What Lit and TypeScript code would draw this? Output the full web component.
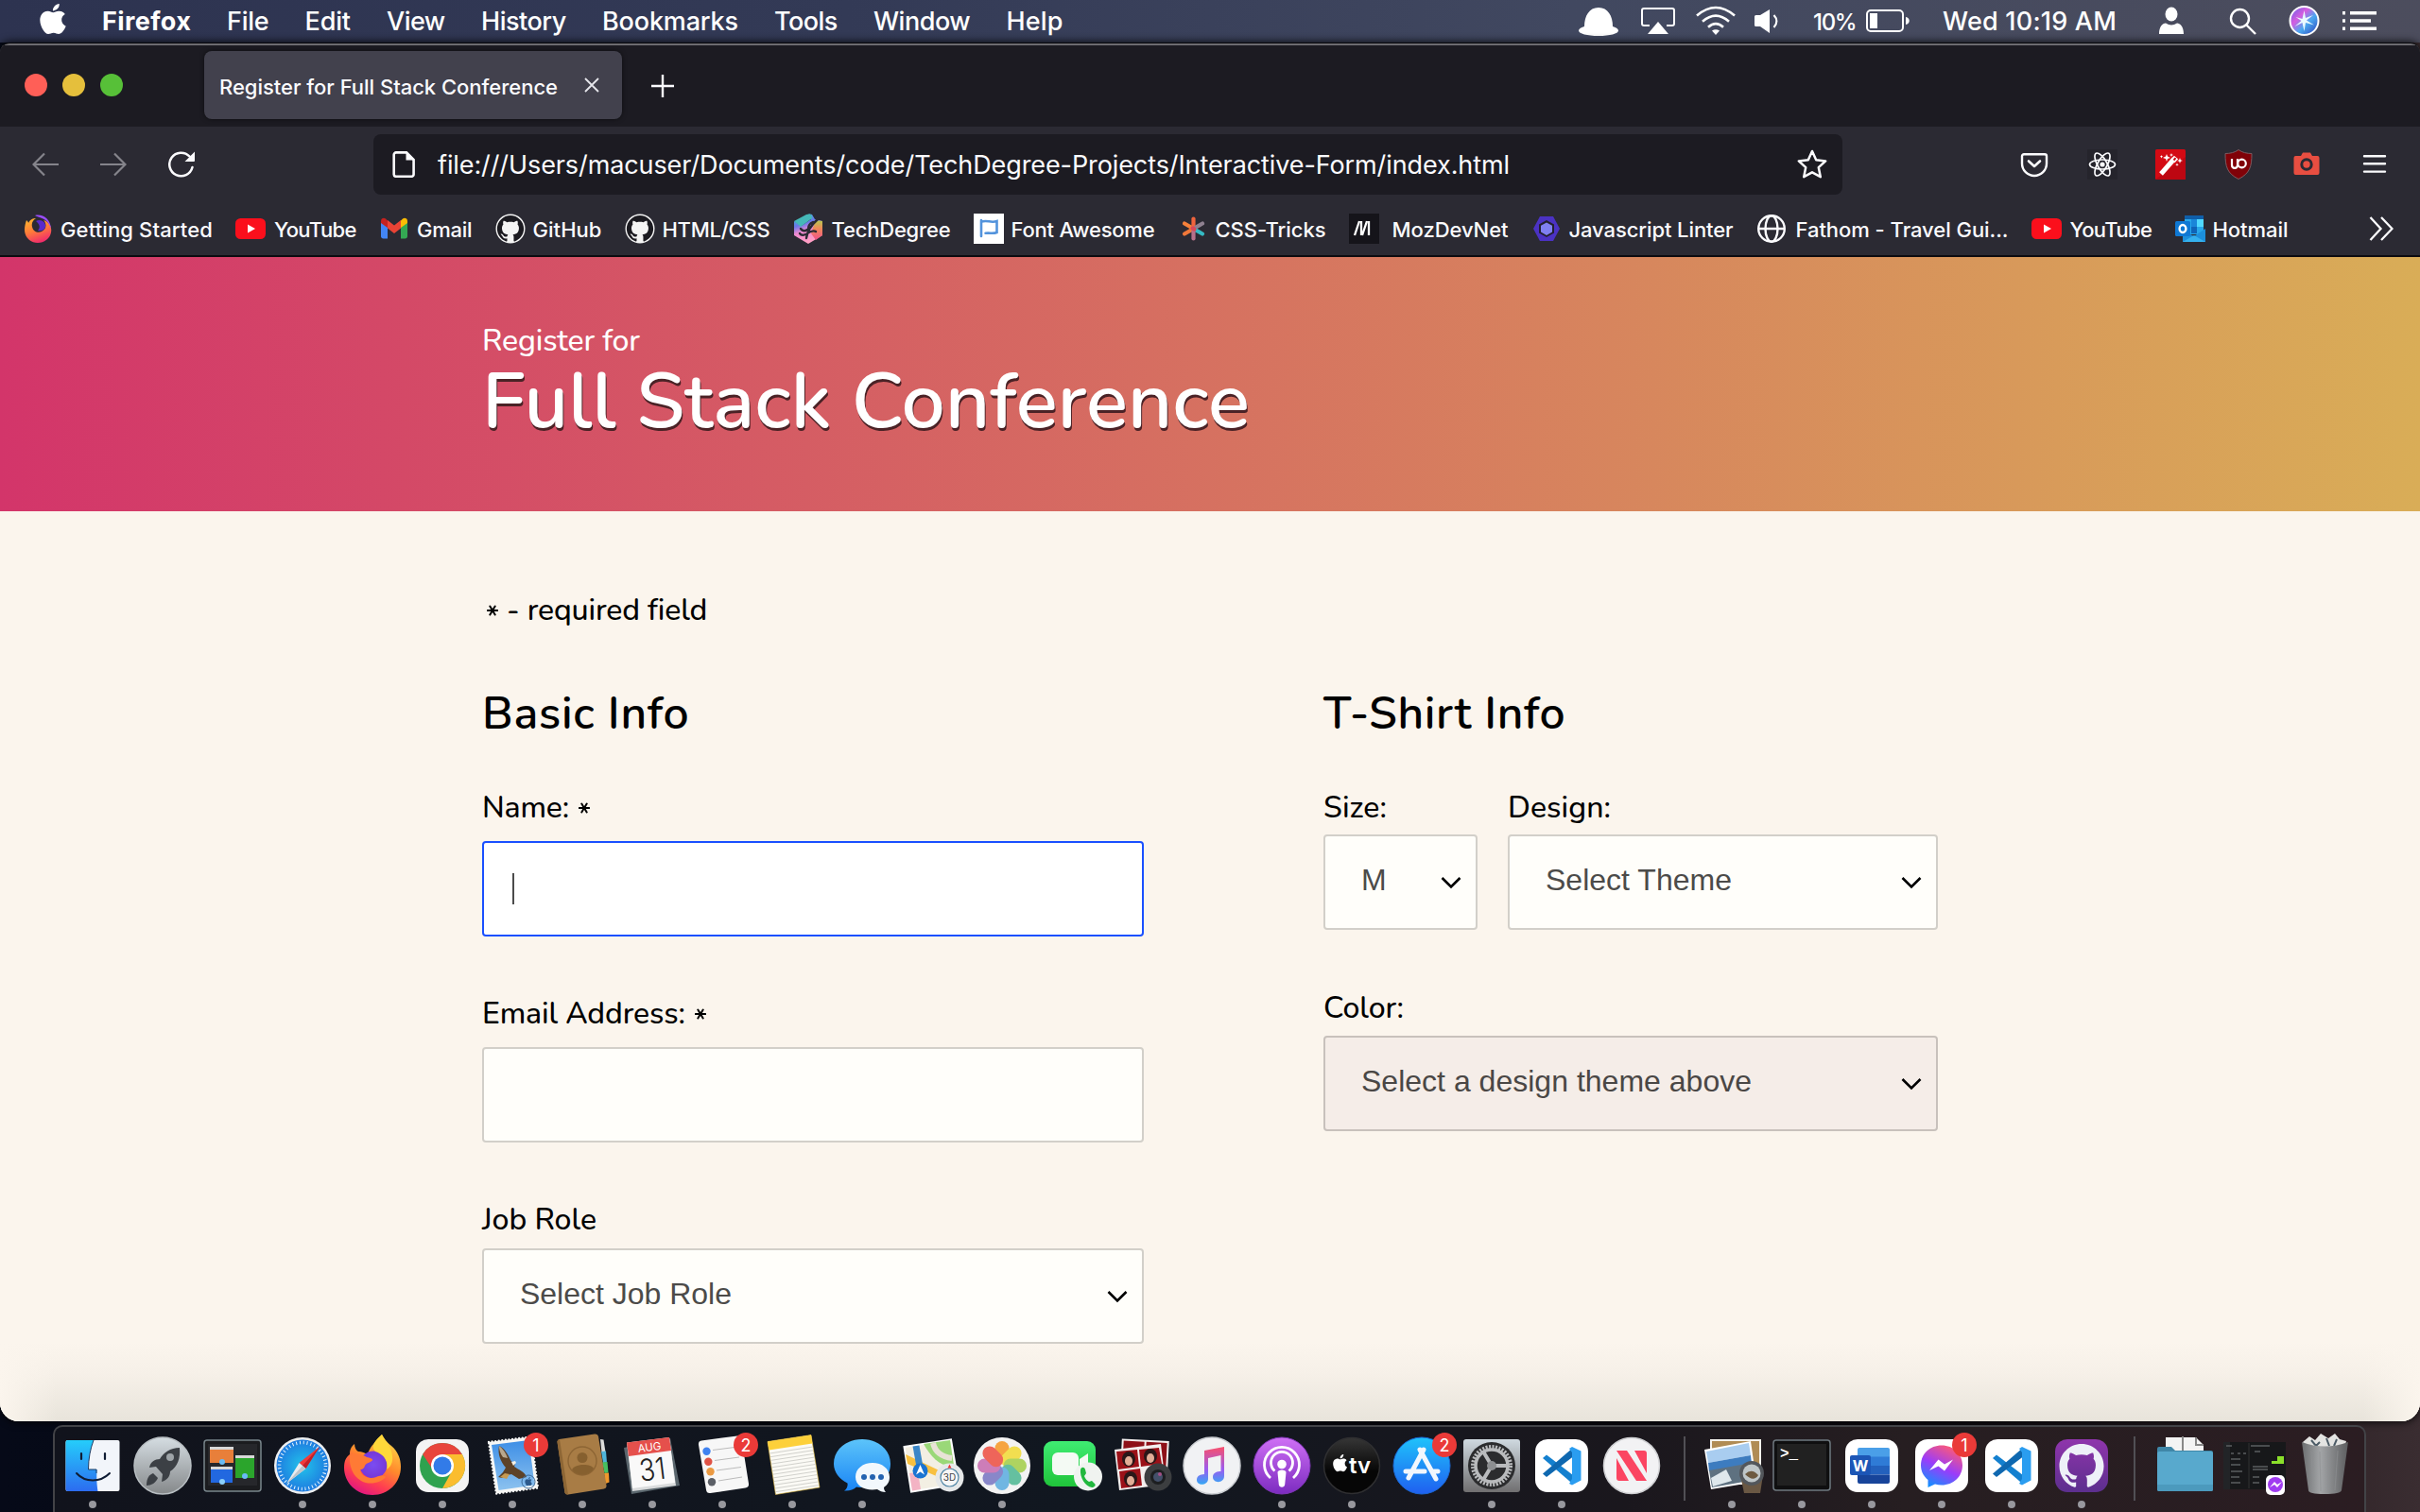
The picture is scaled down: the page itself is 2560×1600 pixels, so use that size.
import { LitElement, html, svg, css, nothing } from "lit";
import { customElement, property } from "lit/decorators.js";

const GITHUB =
  "M12 .297c-6.63 0-12 5.373-12 12 0 5.303 3.438 9.8 8.205 11.385.6.113.82-.258.82-.577 0-.285-.01-1.04-.015-2.04-3.338.724-4.042-1.61-4.042-1.61C4.422 18.07 3.633 17.7 3.633 17.7c-1.087-.744.084-.729.084-.729 1.205.084 1.838 1.236 1.838 1.236 1.07 1.835 2.809 1.305 3.495.998.108-.776.417-1.305.76-1.605-2.665-.3-5.466-1.332-5.466-5.93 0-1.31.465-2.38 1.235-3.22-.135-.303-.54-1.523.105-3.176 0 0 1.005-.322 3.3 1.23.96-.267 1.98-.399 3-.405 1.02.006 2.04.138 3 .405 2.28-1.552 3.285-1.23 3.285-1.23.645 1.653.24 2.873.12 3.176.765.84 1.23 1.91 1.23 3.22 0 4.61-2.805 5.625-5.475 5.92.42.36.81 1.096.81 2.22 0 1.606-.015 2.896-.015 3.286 0 .315.21.69.825.57C20.565 22.092 24 17.592 24 12.297c0-6.627-5.373-12-12-12";
const APPLE =
  "M12.152 6.896c-.948 0-2.415-1.078-3.96-1.04-2.04.027-3.91 1.183-4.961 3.014-2.117 3.675-.546 9.103 1.519 12.09 1.013 1.454 2.208 3.09 3.792 3.039 1.52-.065 2.09-.987 3.935-.987 1.831 0 2.35.987 3.96.948 1.637-.026 2.676-1.48 3.676-2.948 1.156-1.688 1.636-3.325 1.662-3.415-.039-.013-3.182-1.221-3.22-4.857-.026-3.04 2.48-4.494 2.597-4.559-1.429-2.09-3.623-2.324-4.39-2.376-2-.156-3.675 1.09-4.61 1.09zM15.53 3.83c.843-1.012 1.4-2.427 1.245-3.83-1.207.052-2.662.805-3.532 1.818-.78.896-1.454 2.338-1.273 3.714 1.338.104 2.715-.688 3.559-1.701";

/** A single line of text tracked so that it fills a given width. */
@customElement("fit-text")
class FitText extends LitElement {
  @property({ type: Number }) w = 0;
  @property() text = "";
  static styles = css`
    :host { display: inline-block; white-space: pre; flex: none; }
    .run { display: inline-block; }
  `;
  render() {
    return html`<span class="run">${this.text}</span>`;
  }
  updated() {
    const run = this.renderRoot.querySelector(".run") as HTMLElement;
    run.style.letterSpacing = "0px";
    const natural = run.getBoundingClientRect().width;
    const n = this.text.length;
    if (this.w && n > 1) {
      run.style.letterSpacing = `${((this.w - natural) / (n - 0.5)).toFixed(3)}px`;
      this.style.width = `${this.w}px`;
    }
  }
}

/* ---------- menu bar ---------- */

const MENUS: [string, number][] = [
  ["File", 44.5], ["Edit", 48.5], ["View", 62], ["History", 90], ["Bookmarks", 144],
  ["Tools", 67], ["Window", 102.5], ["Help", 60],
];

const STATUS: { gap: number; w: number; art?: unknown; text?: string; small?: boolean }[] = [
  { gap: 0, w: 42, art: svg`<path d="M6 20C6 9 11 0 21 0s15 9 15 20c4 1 6 3 6 4.500 0 3-9 5.500-21 5.500S0 27.500 0 24.500C0 23 2 21 6 20z" fill="#fff"/>` },
  { gap: 24, w: 36, art: svg`<path d="M9 19H3a2 2 0 0 1-2-2V3a2 2 0 0 1 2-2h30a2 2 0 0 1 2 2v14a2 2 0 0 1-2 2h-6" fill="none" stroke="#fff" stroke-width="2"/><path d="M18 15l11 13H7z" fill="#fff"/>` },
  { gap: 22, w: 42, art: svg`<g fill="none" stroke="#fff" stroke-width="2.6"><path d="M1 8.500Q21-8.500 41 8.500"/><path d="M7 14.800Q21 2.500 35 14.800"/><path d="M13 20.800Q21 13.500 29 20.800"/></g><path d="M17 24.500q4-2.500 8 0l-4 4.500z" fill="#fff"/>` },
  { gap: 20, w: 26, art: svg`<path d="M0 9.500q0-1.500 1.500-1.500H6L16 2v25l-10-7H1.500Q0 20 0 18.500z" fill="#fff"/><path d="M20.500 8c3.800 4 3.800 9 0 13" fill="none" stroke="#fff" stroke-width="2.200"/>` },
  { gap: 36, w: 46, text: "10%", small: true },
  { gap: 10, w: 46, art: svg`<rect x="1" y="3" width="38" height="22" rx="4" fill="none" stroke="#fff" stroke-width="2"/><rect x="4" y="6" width="8" height="16" fill="#fff"/><path d="M42 10c5 1 5 7 0 8z" fill="#fff"/>` },
  { gap: 35, w: 184, text: "Wed 10:19 AM" },
  { gap: 45, w: 26, art: svg`<ellipse cx="13" cy="7" rx="6.500" ry="7.500" fill="#fff"/><path d="M0 28c0-8 4-11.500 7-11.500 4 2.500 8 2.500 12 0 3 0 7 3.500 7 11.500z" fill="#fff"/>` },
  { gap: 48, w: 29, art: svg`<g fill="none" stroke="#fff" stroke-width="2.400"><circle cx="11.500" cy="11.500" r="9.500"/><path d="M18.500 18.500L28 28"/></g>` },
  { gap: 34, w: 33, art: svg`<defs><linearGradient id="siri" x1="0" y1="0" x2="1" y2="1"><stop offset="0" stop-color="#5a62e8"/><stop offset=".35" stop-color="#d65ce0"/><stop offset=".6" stop-color="#4aa8f0"/><stop offset="1" stop-color="#2b3cb8"/></linearGradient></defs><circle cx="16.500" cy="14" r="15" fill="url(#siri)" stroke="#fff" stroke-width="2"/><path d="M16.500 3l1.500 8 8-3-7 5.500 8 5-9-2.500-1.500 9-2-9-8 4 7-6-6-4 7 2z" fill="#e9fbff"/>` },
  { gap: 24, w: 36, art: svg`<g fill="#fff"><path d="M0 4h3v3.500H0zM0 12.200h3v3.500H0zM0 20.500h3V24H0zM8 4h28v3.500H8zM8 12.200h22v3.500H8zM8 20.500h28V24H8z"/></g>` },
];

@customElement("menu-bar")
class MenuBar extends LitElement {
  static styles = css`
    :host { display: flex; flex: none; height: 45px; box-sizing: border-box; align-items: flex-start;
      font: 500 27px/45px Inter, "Liberation Sans", sans-serif; color: #fff;
      padding: 0 46px 0 42px;
      background: linear-gradient(90deg, #2d3350 0%, #333a56 35%, #414860 65%, #4c4d5d 100%); }
    .apple { width: 28px; height: 32px; margin: 4px 38px 0 0; flex: none; }
    .menus { display: flex; gap: 38px; }
    .bold { font-weight: 700; }
    .status { display: flex; margin-left: auto; }
    .status svg { display: block; height: 28px; margin-top: 8px; overflow: visible; }
    .small { font-size: 24px; line-height: 43px; }
  `;
  render() {
    return html`
      <svg class="apple" viewBox="2 0 20 24" preserveAspectRatio="none"><path d=${APPLE} fill="#fff" /></svg>
      <div class="menus">
        <fit-text class="bold" .w=${94} .text=${"Firefox"}></fit-text>
        ${MENUS.map(([t, w]) => html`<fit-text .w=${w} .text=${t}></fit-text>`)}
      </div>
      <div class="status">
        ${STATUS.map((s) => html`<div style="margin-left:${s.gap}px;width:${s.w}px">
          ${s.text
            ? html`<fit-text class=${s.small ? "small" : ""} .w=${s.w} .text=${s.text}></fit-text>`
            : html`<svg width=${s.w} height="28" viewBox="0 0 ${s.w} 28">${s.art}</svg>`}
        </div>`)}
      </div>`;
  }
}

/* ---------- browser chrome ---------- */

const YT = svg`<rect x="0" y="5" width="32" height="22" rx="5.500" fill="#fb0f1c"/><path d="M13 11.500l8 4.500-8 4.500z" fill="#fff"/>`;
const GH = svg`<circle cx="16" cy="16" r="15.500" fill="#f4f4f4"/><path transform="translate(1.900 1.600) scale(1.175)" d=${GITHUB} fill="#1b1a20"/>`;

const BOOKMARKS: { art: unknown; t: string; w: number; lead?: number }[] = [
  { t: "Getting Started", w: 161, art: svg`<defs><linearGradient id="ffb" x1=".2" y1="0" x2=".6" y2="1"><stop offset="0" stop-color="#ffb52e"/><stop offset=".5" stop-color="#ff7a3a"/><stop offset="1" stop-color="#f0286e"/></linearGradient></defs><path d="M4 7c1 1 2 2 2 3 2-4 5-5 8-5-3 2-5 5-4 9 1 5 6 7 10 5 5-2 6-8 2-12 7 2 9 8 8 13-1 6-7 11-14 11C8 31 2 25 2 17c0-4 1-7 2-10z" fill="url(#ffb)"/><path d="M13 2c8-2 17 4 17 15-1-6-5-11-12-13-2-1-4-1-5-2z" fill="#9b4dff"/><path d="M14 8c5-3 11 1 10 6-1 4-5 5-8 4 3-3 2-7-2-10z" fill="#592acb"/>` },
  { t: "YouTube", w: 87, lead: 1, art: YT },
  { t: "Gmail", w: 58.5, art: svg`<path d="M2 9v15c0 1.500 1 2.500 2.500 2.500H9V13z" fill="#4285f4"/><path d="M30 9v15c0 1.500-1 2.500-2.500 2.500H23V13z" fill="#34a853"/><path d="M23 7.500V15l7-5V8c0-3-3-4-5-2.500z" fill="#fbbc04"/><path d="M9 7.500V15l-7-5V8c0-3 3-4 5-2.500z" fill="#c5221f"/><path d="M9 7l7 5.500L23 7v8.500l-7 5.500-7-5.500z" fill="#ea4335"/>` },
  { t: "GitHub", w: 73, art: GH },
  { t: "HTML/CSS", w: 114, art: GH },
  { t: "TechDegree", w: 126, lead: 1, art: svg`<defs><linearGradient id="td" x1="0" y1=".1" x2=".3" y2="1"><stop offset="0" stop-color="#3fb0d8"/><stop offset=".35" stop-color="#6a78e8"/><stop offset=".6" stop-color="#f08ad0"/><stop offset="1" stop-color="#ff9ec4"/></linearGradient><linearGradient id="tdr" x1="0" y1="0" x2="0" y2="1"><stop offset="0" stop-color="#b8c850"/><stop offset=".4" stop-color="#f08a58"/><stop offset="1" stop-color="#f0508a"/></linearGradient></defs><path d="M16 0l3 2v4L9 13 1 8v15l15 9 15-9V8l-8-2-3-5z" fill="url(#td)"/><path d="M1 8L14 1q6-2 6 4L8 14z" fill="#45b8b8"/><path d="M31 8q-8-2-9 4l-3 9 5 7 7-5z" fill="url(#tdr)"/><path d="M14 26q1-10 12-20M15 17q-4 3-7-1M16 16q0-5 5-7M15 21q6-4 9-2M13 22q-4 2-6-1" fill="none" stroke="#2b2a33" stroke-width="2.400" stroke-linecap="round"/>` },
  { t: "Font Awesome", w: 152, art: svg`<rect width="32" height="32" fill="#fff"/><path d="M8 7v17M8 8.800c6-2.600 10 1.600 16.500-.8v12c-4 1.600-7 .2-12 .8" fill="none" stroke="#5293dc" stroke-width="2.600" stroke-linecap="round"/>` },
  { t: "CSS-Tricks", w: 117, art: svg`<g stroke-width="4.200" stroke-linecap="round"><path d="M16.500 5.500v8" stroke="#f0643d"/><path d="M7 10.500l7 4" stroke="#f5803a"/><path d="M26 10.500l-7 4" stroke="#8e8090"/><path d="M7 21.500l7-4" stroke="#f0783a"/><path d="M26 21.500l-7-4" stroke="#35b9c4"/><path d="M16.500 26.500v-8" stroke="#b8708a"/><path d="M15.500 15.500l2 1" stroke="#d8485a"/></g>` },
  { t: "MozDevNet", w: 123, lead: 6, art: svg`<rect width="32" height="32" fill="#15141a"/><path d="M6 23l5-15M13 8v15M14 23l5-15M21 8v15" fill="none" stroke="#fff" stroke-width="2.300"/>` },
  { t: "Javascript Linter", w: 174, art: svg`<path d="M9 3h14l7 13-7 13H9L2 16z" fill="#4b32c3"/><path d="M16 7l8 4.500v9L16 25l-8-4.500v-9z" fill="#23212e"/><path d="M16 9.500l6 3.300v6.600L16 23l-6-3.600v-6.600z" fill="#8080f2"/>` },
  { t: "Fathom - Travel Gui...", w: 225, lead: 2, art: svg`<g fill="none" stroke="#fbfbfe" stroke-width="2.400"><circle cx="16" cy="16" r="13.800"/><ellipse cx="16" cy="16" rx="6.500" ry="13.800"/><path d="M2 16h28"/></g>` },
  { t: "YouTube", w: 87, lead: 1, art: YT },
  { t: "Hotmail", w: 80, art: svg`<path d="M10 2h20v20H10z" fill="#28a8ea"/><path d="M10 2h20v4H10z" fill="#0f5ea8"/><path d="M17 6h6v8h-6z" fill="#1a86d8"/><path d="M23 6h7v8h-7z" fill="#50d9ff"/><path d="M17 14h6v7h-6z" fill="#0f64b8"/><path d="M8 18l12 6 12-8v14H8z" fill="#1c8fdc"/><path d="M8 30l12-7 12 7z" fill="#35b1ee"/><rect y="8" width="16" height="16" rx="1.500" fill="#0f78d4"/><ellipse cx="8" cy="16" rx="3.400" ry="4" fill="none" stroke="#fff" stroke-width="2.400"/>` },
];

const TOOLS: unknown[] = [
  svg`<path d="M5 5.200h22a2 2 0 0 1 2 2V15a13 13 0 0 1-26 0V7.200a2 2 0 0 1 2-2z" fill="none" stroke="#fbfbfe" stroke-width="2.400"/><path d="M10 12.500l6 5.500 6-5.500" fill="none" stroke="#fbfbfe" stroke-width="2.600" stroke-linecap="round" stroke-linejoin="round"/>`,
  svg`<rect width="32" height="32" fill="#25242c"/><g fill="none" stroke="#fbfbfe" stroke-width="1.700"><ellipse cx="16" cy="16" rx="13.500" ry="5"/><ellipse cx="16" cy="16" rx="13.500" ry="5" transform="rotate(60 16 16)"/><ellipse cx="16" cy="16" rx="13.500" ry="5" transform="rotate(120 16 16)"/></g><circle cx="16" cy="16" r="2.600" fill="#fbfbfe"/>`,
  svg`<rect width="32" height="32" rx="1.500" fill="#d40a14"/><path d="M0 32L32 8v24z" fill="#bd0712"/><path d="M6 26L20 10" stroke="#fff" stroke-width="5"/><path d="M18.500 12.500L22 8.500" stroke="#fff" stroke-width="5.600"/><path d="M19.500 11.500l2-2.300" stroke="#c40812" stroke-width="2"/><g fill="#fff"><path d="M12 5l1 2.600L16 9l-3 1-1 3-1-3-3-1 3-1.400zM17 4l.6 1.400L19 6l-1.400.6L17 8l-.6-1.400L15 6l1.400-.6zM26 9l.8 2.200L29 12l-2.200.8L26 15l-.8-2.200L23 12l2.200-.8zM23 14.500l.5 1.300 1.300.5-1.300.5-.5 1.300-.5-1.300-1.300-.5 1.300-.5zM6.500 6l.5 1.300 1.300.5-1.300.5-.5 1.300-.5-1.300-1.300-.5 1.300-.5z"/></g>`,
  svg`<path d="M16 .5c4 3 9 4 14 4 0 14-2 21-14 27C4 25.500 2 18.500 2 4.500c5 0 10-1 14-4z" fill="#800208" stroke="#7d5a60" stroke-width="1"/><g fill="none" stroke="#fff" stroke-width="2.200"><path d="M9 10v6.500c0 4.500 6 4.500 6 0V10"/><circle cx="19.500" cy="15" r="4.300"/></g>`,
  svg`<path d="M4.500 7H10l2-3.500h8L22 7h5.500A2 2 0 0 1 29.500 9v16a2 2 0 0 1-2 2h-23a2 2 0 0 1-2-2V9a2 2 0 0 1 2-2z" fill="#e84e41"/><circle cx="16" cy="16" r="5.200" fill="none" stroke="#2b2a33" stroke-width="3"/>`,
  svg`<g stroke="#fbfbfe" stroke-width="2.400" stroke-linecap="round"><path d="M5 7.200h22M5 15.200h22M5 23.600h22"/></g>`,
];

@customElement("browser-chrome")
class BrowserChrome extends LitElement {
  static styles = css`
    :host { display: block; flex: none; color: #fbfbfe; font-family: Inter, "Liberation Sans", sans-serif; }
    svg { display: block; flex: none; }
    .tabs { height: 86px; background: #1c1b22; display: flex; align-items: flex-start; box-sizing: border-box; padding: 6px 0 0 26px; }
    .lights { display: flex; gap: 16px; margin-top: 24px; }
    .light { width: 24px; height: 24px; border-radius: 50%; }
    .close { background: #ff5f57; } .min { background: #e5bf3c; } .max { background: #57c038; }
    .tab { margin-left: 86px; width: 442px; height: 72px; box-sizing: border-box; padding: 0 24px 0 16px; border-radius: 8px;
      background: #42414d; box-shadow: 0 0 5px rgba(0,0,0,.55); display: flex; align-items: center; justify-content: space-between;
      font-size: 22px; font-weight: 500; line-height: 30px; }
    .label { padding-top: 3px; }
    .plus { margin: 25px 0 0 31px; }
    .bar { height: 80px; background: #2b2a33; display: flex; align-items: center; box-sizing: border-box; padding: 0 32px 0 34px; }
    .nav { display: flex; gap: 44px; width: 361px; }
    .url { width: 1554px; height: 64px; box-sizing: border-box; border-radius: 8px; background: #1c1b22; display: flex; align-items: center;
      padding: 0 16px 0 20px; font-size: 27px; line-height: 40px; }
    .address { padding-top: 2px; }
    .doc { margin-right: 24px; }
    .star { margin-left: auto; }
    .tools { margin-left: auto; display: flex; gap: 40px; }
    .marks { height: 56px; background: #2b2a33; display: flex; align-items: flex-start; box-sizing: border-box; padding: 12px 28px 0 24px;
      font-size: 22px; font-weight: 500; line-height: 34px; }
    .list { display: flex; gap: 24px; }
    .mark { display: flex; gap: 8px; }
    .more { margin: 3px 0 0 auto; }
    .edge { height: 2px; background: #0c0b10; }
  `;
  render() {
    return html`
      <div class="tabs">
        <div class="lights"><div class="light close"></div><div class="light min"></div><div class="light max"></div></div>
        <div class="tab">
          <fit-text class="label" .w=${358} .text=${"Register for Full Stack Conference"}></fit-text>
          <svg width="16" height="16" viewBox="0 0 16 16"><path d="M1 1l14 14M15 1L1 15" stroke="#e6e6ec" stroke-width="1.800" /></svg>
        </div>
        <svg class="plus" width="24" height="24" viewBox="0 0 24 24"><path d="M12 0v24M0 12h24" stroke="#fbfbfe" stroke-width="2.400" /></svg>
      </div>
      <div class="bar">
        <div class="nav">
          <svg width="28" height="28" viewBox="0 0 28 28"><path d="M28 14H1.500M13 2.500L1.500 14 13 25.500" fill="none" stroke="#85848b" stroke-width="2.200" /></svg>
          <svg width="28" height="28" viewBox="0 0 28 28"><path d="M0 14h26.500M15 2.500L26.500 14 15 25.500" fill="none" stroke="#85848b" stroke-width="2.200" /></svg>
          <svg width="28" height="28" viewBox="0 0 28 28"><path d="M25.500 17A12.300 12.300 0 1 1 22.500 5.500" fill="none" stroke="#fbfbfe" stroke-width="2.500" stroke-linecap="round" /><path d="M28 .500v9.500a1 1 0 0 1-1 1h-9.500z" fill="#fbfbfe" /></svg>
        </div>
        <div class="url">
          <svg class="doc" width="24" height="28" viewBox="0 0 24 28"><path d="M4 1.400h11L22.600 9v15.500a2.300 2.300 0 0 1-2.300 2.300H4a2.300 2.300 0 0 1-2.300-2.300V3.700A2.300 2.300 0 0 1 4 1.400z" fill="none" stroke="#fbfbfe" stroke-width="2.600" /><path d="M14.500 1v8.500H23z" fill="#fbfbfe" /></svg>
          <fit-text class="address" .w=${1134} .text=${"file:///Users/macuser/Documents/code/TechDegree-Projects/Interactive-Form/index.html"}></fit-text>
          <svg class="star" width="32" height="32" viewBox="0 0 32 32"><path d="M16 2l4.200 9.200 10 1.200-7.400 6.800 2 10L16 24.300l-8.800 4.900 2-10L1.800 12.400l10-1.200z" fill="none" stroke="#fbfbfe" stroke-width="2.500" stroke-linejoin="round" /></svg>
        </div>
        <div class="tools">${TOOLS.map((a) => html`<svg width="32" height="32" viewBox="0 0 32 32">${a}</svg>`)}</div>
      </div>
      <div class="marks">
        <div class="list">
          ${BOOKMARKS.map((b) => html`<div class="mark">
            <svg width="32" height="32" viewBox="0 0 32 32">${b.art}</svg>
            <fit-text style="padding-left:${b.lead ?? 0}px" .w=${b.w} .text=${b.t}></fit-text>
          </div>`)}
        </div>
        <svg class="more" width="26" height="26" viewBox="0 0 26 26"><path d="M1.500 1l11 12-11 12M13 1l11.500 12L13 25" fill="none" stroke="#fbfbfe" stroke-width="2.300" /></svg>
      </div>
      <div class="edge"></div>`;
  }
}

/* ---------- registration page ---------- */

@customElement("select-box")
class SelectBox extends LitElement {
  @property() text = "";
  @property({ type: Number }) w = 0;
  @property({ type: Boolean, reflect: true }) disabled = false;
  static styles = css`
    :host { display: flex; align-items: center; justify-content: space-between; box-sizing: border-box; height: 101px; padding: 0 15px 4.500px 38px;
      border: 2px solid #d2cfc9; border-radius: 4px; background: #fffefa; color: #4c4b49;
      font: 32px/40px "Liberation Sans", Arial, sans-serif; }
    :host([disabled]) { background: #f5ede8; border-color: #c8c1bc; color: #4a4745; }
    .arrow { display: block; margin-top: 5px; }
  `;
  render() {
    return html`<fit-text .w=${this.w} .text=${this.text}></fit-text>
      <svg class="arrow" width="22" height="14" viewBox="0 0 22 14"><path d="M1.500 2L11 11.500 20.500 2" fill="none" stroke="#000" stroke-width="2.600" /></svg>`;
  }
}

@customElement("register-page")
class RegisterPage extends LitElement {
  static styles = css`
    :host { display: flex; flex-direction: column; flex: 1; font-family: Nunito, Lato, "Open Sans", sans-serif; color: #000; }
    .hero { height: 269px; box-sizing: border-box; padding: 70px 0 0 510px; color: #fff;
      background: linear-gradient(90deg, #d3356a 0%, #d9ad57 100%); }
    .kicker { font-size: 32px; line-height: 38px; height: 38px; font-weight: 500; }
    .title { margin: 0; font-size: 82px; line-height: 90px; height: 90px; font-weight: 600;
      text-shadow: 1px 3px 0 #4a2226; }
    .main { flex: 1; box-sizing: border-box; padding: 83px 0 0 510px;
      background:
        linear-gradient(90deg, #fbf5ed 0, rgba(251,245,237,0) 60px, rgba(251,245,237,0) calc(100% - 60px), #fbf5ed 100%) 0 100% / 100% 84px no-repeat,
        linear-gradient(180deg, #fbf5ed 0, #f6f0e8 40%, #e8e4db 100%) 0 100% / 100% 84px no-repeat, #fbf5ed; }
    .note, .label { font-size: 32px; font-weight: 500; line-height: 44px; height: 44px; display: flex; }
    .note { padding-left: 4px; }
    .cols { display: flex; gap: 190px; margin-top: 57px; }
    .left { width: 700px; }
    .right { width: 650px; }
    h2 { margin: 0 0 48px; font-size: 48px; line-height: 60px; height: 60px; font-weight: 600; }
    .input { height: 101px; box-sizing: border-box; border: 2px solid #d2cfc9; border-radius: 4px; background: #fffefa; margin-top: 13px; }
    .input.focus { border-color: #1a50ff; background: #fff; padding: 32px 0 0 30px; }
    .caret { width: 2px; height: 33px; background: #4c4c4c; }
    .field { margin-bottom: 60px; }
    .field select-box { margin-top: 8px; }
    .row { display: flex; gap: 32px; margin-bottom: 61px; }
    .row select-box { margin-top: 6px; }
    .size { width: 163px; }
    .design { flex: 1; }
    .color { margin-top: 7px; }
    .star { width: 12px; height: 14px; margin: 15px 0 0 10px; }
    .note .star { margin: 15px 9px 0 1px; }
  `;
  star() {
    return html`<svg class="star" viewBox="0 0 12 14"><path d="M.8 7h10.400M3.300 2.600l5.400 8.800M8.700 2.600l-5.400 8.800" stroke="#000" stroke-width="2" stroke-linecap="round" /></svg>`;
  }
  render() {
    return html`
      <div class="hero">
        <div class="kicker"><fit-text .w=${167} .text=${"Register for"}></fit-text></div>
        <h1 class="title"><fit-text .w=${812} .text=${"Full Stack Conference"}></fit-text></h1>
      </div>
      <div class="main">
        <div class="note">${this.star()}<fit-text .w=${212} .text=${"- required field"}></fit-text></div>
        <div class="cols">
          <div class="left">
            <h2><fit-text .w=${219} .text=${"Basic Info"}></fit-text></h2>
            <div class="field">
              <div class="label"><fit-text .w=${92} .text=${"Name:"}></fit-text>${this.star()}</div>
              <div class="input focus"><div class="caret"></div></div>
            </div>
            <div class="field">
              <div class="label"><fit-text .w=${215} .text=${"Email Address:"}></fit-text>${this.star()}</div>
              <div class="input"></div>
            </div>
            <div class="field">
              <div class="label"><fit-text .w=${121} .text=${"Job Role"}></fit-text></div>
              <select-box .w=${224} .text=${"Select Job Role"}></select-box>
            </div>
          </div>
          <div class="right">
            <h2><fit-text .w=${256} .text=${"T-Shirt Info"}></fit-text></h2>
            <div class="row">
              <div class="size">
                <div class="label"><fit-text .w=${67} .text=${"Size:"}></fit-text></div>
                <select-box .w=${0} .text=${"M"}></select-box>
              </div>
              <div class="design">
                <div class="label"><fit-text .w=${109} .text=${"Design:"}></fit-text></div>
                <select-box .w=${197} .text=${"Select Theme"}></select-box>
              </div>
            </div>
            <div class="label"><fit-text .w=${85} .text=${"Color:"}></fit-text></div>
            <select-box class="color" disabled .w=${413} .text=${"Select a design theme above"}></select-box>
          </div>
        </div>
      </div>`;
  }
}

/* ---------- dock ---------- */

const badge = (n: string, x = 57, y = 10) => svg`<circle cx=${x} cy=${y} r="13" fill="#ea3a38"/><text x=${x} y=${y + 6.5} text-anchor="middle" font-family="Inter, sans-serif" font-size="18" fill="#fff">${n}</text>`;
const tile = (fill: string) => svg`<rect x="4" y="4" width="56" height="56" rx="13" fill=${fill}/>`;
const range = (n: number) => Array.from({ length: n }, (_, i) => i);

const VSCODE = svg`${tile("#fff")}<path d="M12 24l4-3.500L44 42v9.500z" fill="#1480cf"/><path d="M12 40.500l4 3.500L44 22.500V13z" fill="#0f68b0"/><path d="M43 12l9.500 4.500v31L43 52.500 40 51l3-5V18l-3-4z" fill="#2a9df0"/>`;
const MESSENGER = svg`<defs><linearGradient id="msgr" x1=".2" y1="1" x2=".7" y2="0"><stop offset="0" stop-color="#0a94ff"/><stop offset=".5" stop-color="#9a3cfa"/><stop offset="1" stop-color="#ff5a75"/></linearGradient></defs>${tile("#fff")}<path d="M32 10.500c-12.500 0-22 9-22 21 0 6.500 2.800 11.500 7.500 15.500v8l7.500-3.500c2.200.6 4.600 1 7 1 12.500 0 22-9 22-21s-9.500-21-22-21z" fill="url(#msgr)"/><path d="M19 37l9.500-11.500 6.500 5 9-5L35 37.500l-6.500-5z" fill="#fff"/>`;
const NOTE_LINES = svg`${range(12).map((i) => svg`<path d="M${8.3 + i * 0.55} ${19 + i * 3.7}l45.500-7" stroke="#c6c6c2" stroke-width=".8"/>`)}`;

type DockItem = { art: unknown; dot?: boolean };
const MAIN: DockItem[] = [
  { dot: true, art: svg`<defs><linearGradient id="fd" x1="0" y1="0" x2="0" y2="1"><stop offset="0" stop-color="#25cdfb"/><stop offset="1" stop-color="#2c6cf0"/></linearGradient></defs><rect x="3.500" y="5" width="57" height="54" rx="2" fill="#f2f5fa"/><path d="M33 5H5.500a2 2 0 0 0-2 2v50a2 2 0 0 0 2 2h32c-1-7-1.500-13-1-23h-9c0-11 2-22 5.500-31z" fill="url(#fd)"/><path d="M33 5c-3.500 9-5.500 20-5.500 31h8.500v4" fill="none" stroke="#1c3d66" stroke-width="1"/><path d="M20 19v6M45 19v6" stroke="#0f1c33" stroke-width="2.200" stroke-linecap="round"/><path d="M15 40c9 10 25 10 35 0" fill="none" stroke="#0f1c33" stroke-width="2" stroke-linecap="round"/>` },
  { art: svg`<defs><linearGradient id="lp" x1="0" y1="0" x2="0" y2="1"><stop offset="0" stop-color="#d5dde2"/><stop offset="1" stop-color="#85888a"/></linearGradient></defs><circle cx="32" cy="32" r="30" fill="url(#lp)" stroke="#b9bfc3" stroke-width="1.500"/><path d="M50 13c-10 0-17 5-21 12-5 0-10 3-11 9l7-1 7 8-1 8c6-2 9-6 9-11 8-5 11-14 10-25z" fill="#3c4045"/><circle cx="40" cy="23" r="4" fill="#9ea4a8"/><path d="M22 40c-6 2-7 8-7 13 5 0 10-3 12-8z" fill="#3c4045"/>` },
  { art: svg`<rect x="2" y="5" width="60" height="54" rx="3" fill="#1b1c1f" stroke="#79868c" stroke-width="1.500"/><rect x="6" y="9" width="52" height="44" fill="#26272b"/><rect x="8" y="12" width="25" height="17" fill="#e87f3a"/><path d="M8 12h25v3H8z" fill="#d8d8d8"/><rect x="9" y="33" width="23" height="17" fill="#2268e0"/><path d="M9 33h23v3H9z" fill="#d8d8d8"/><rect x="35" y="21" width="20" height="24" fill="#2ba52c"/><path d="M35 21h20v3H35z" fill="#d8d8d8"/><circle cx="21" cy="28" r="3" fill="#69bbf5"/><circle cx="21" cy="49" r="3" fill="#8cd0fa"/><circle cx="45" cy="43" r="3" fill="#69bbf5"/>` },
  { dot: true, art: svg`<defs><radialGradient id="sf"><stop offset="0" stop-color="#22c3ea"/><stop offset="1" stop-color="#1e7be0"/></radialGradient></defs><circle cx="32" cy="32" r="30" fill="#eceef0"/><circle cx="32" cy="32" r="27.500" fill="url(#sf)"/><circle cx="32" cy="32" r="24.500" fill="none" stroke="#e5f4fd" stroke-width="3.600" stroke-dasharray="1 2.850"/><path d="M50 12L28.500 29l7 6z" fill="#f03a3a"/><path d="M15 51l13.500-22 7 6z" fill="#e9ecef"/><path d="M50 12L32 32l3.500 3z" fill="#c02029"/><path d="M15 51l17-19 3.500 3z" fill="#bfc4ca"/>` },
  { dot: true, art: svg`<defs><linearGradient id="fx" x1=".8" y1="0" x2=".3" y2="1"><stop offset="0" stop-color="#ffe04a"/><stop offset=".45" stop-color="#ff8a2c"/><stop offset=".75" stop-color="#ff3d51"/><stop offset="1" stop-color="#e01583"/></linearGradient><radialGradient id="fxc"><stop offset="0" stop-color="#7a4cf2"/><stop offset="1" stop-color="#7638d8"/></radialGradient></defs><path d="M42-1c3 5 5 8 10 12 7 6 10 14 10 22 0 17-13 30-30 30S2 50 2 34c0-7 2-11 6-14 0-4 1-8 5-11 0 4 2 7 4 8 4 0 7 1 10 4 1-8 8-14 15-22z" fill="url(#fx)"/><circle cx="33" cy="31" r="14.500" fill="url(#fxc)"/><path d="M8 21c6-3 13-1 18 2 3 1 6 1 6 3s-7 3-8 6c-1 4-4 4-5 4 1 7 9 11 17 8 4-2 8-2 10 0-5 6-17 9-26 4C11 43 7 32 8 21z" fill="#ff7a35"/><path d="M42-1c-10 8-11 14-7 18 9 3 14 10 12 19 8-5 7-15 4-22C48 7 44 5 42-1z" fill="#ffd83a"/>` },
  { dot: true, art: svg`${tile("#f4f4f4")}<circle cx="32" cy="32" r="24" fill="#2fa24f"/><path d="M32 20h21a24 24 0 0 1-21 36l10-18z" fill="#fbbd2f"/><path d="M11.200 20L23 38l9-18h20.800A24 24 0 0 0 11.200 20z" fill="#e8453c"/><circle cx="32" cy="32" r="12" fill="#fff"/><circle cx="32" cy="32" r="9.500" fill="#327be8"/>` },
  { dot: true, art: svg`<defs><linearGradient id="sky" x1="0" y1="0" x2="0" y2="1"><stop offset="0" stop-color="#3d8ee6"/><stop offset="1" stop-color="#8cc2ef"/></linearGradient></defs><path d="M7 7L52 1.500l7 54L15 61.500z" fill="#f7f7f5"/><path d="M7 7L52 1.500l7 54L15 61.500z" fill="none" stroke="#f7f7f5" stroke-width="2.400" stroke-linecap="round" stroke-dasharray="0 3.600"/><path d="M10 10L49.500 5l6 47.500L17.500 58z" fill="url(#sky)"/><path d="M18 11c5 2 9 8 12 15 1 2 3 3 5 3l-1 4c4 3 11 5 13 11l-8 2-8-5-4 1-6 3-4-1 5-5 3-5c-5-6-9-14-7-23z" fill="#5d4228"/><path d="M18 11c3 2 7 7 9 13l-5-1c-3-4-4-8-4-12z" fill="#b9a88e"/><path d="M19 44l5-4 5 1-3 5z" fill="#c79a52"/><path d="M31 28l4-1 1 2-3 3z" fill="#f4f1e8"/><circle cx="49" cy="49" r="7" fill="none" stroke="#3a6a99" stroke-width="1"/><path transform="translate(44.500 44) scale(.38)" d=${APPLE} fill="#2d5a8c"/>${badge("1")}` },
  { dot: true, art: svg`<path d="M51 4l3.500.5 2 13-4 .5z" fill="#dcdcda"/><path d="M52 17l5-.5 1 12-4 .5z" fill="#4fb4d8"/><path d="M53 28.500l5.500-.5 1 11.500-4 .5z" fill="#46c060"/><path d="M55 40l5-.5.500 10-4 1.500z" fill="#f0982c"/><path d="M7.500 4L45-1.500q3.500-.5 4 2.500l8.500 52q.5 3-2.500 3.500L17 62.500q-3 .5-3.500-2L5.500 7q0-2.500 2-3z" fill="#a87c45"/><path d="M5.500 6.500q0-2 2.500-2.500l9 58.500q-3 .5-3.500-2z" fill="#8d6635"/><circle cx="32" cy="27" r="15" fill="none" stroke="#8d6534" stroke-width="1.400"/><circle cx="32" cy="23.500" r="5.500" fill="#86602f"/><path d="M21 36c3-6 20-7 23-1-5 8.500-18 9-23 1z" fill="#86602f"/>` },
  { dot: true, art: svg`<path d="M2 13L51 3l10 50-51 9z" fill="#5a666d"/><path d="M6 10L50 3l7 50-46 6z" fill="#d9dbdc"/><path d="M5 7.500L50 2l6 48-45 6z" fill="#f9f9f9"/><path d="M5 7.500L50 2l2 14-45 6z" fill="#e5504c"/><text transform="translate(29.500 16.500) rotate(-7)" text-anchor="middle" font-family="Inter, sans-serif" font-size="11.500" fill="#fff">AUG</text><text transform="translate(33.500 47) rotate(-7) scale(.86 1)" text-anchor="middle" font-family="Inter, sans-serif" font-size="32" font-weight="300" fill="#222">31</text>` },
  { dot: true, art: svg`<path d="M10 5.500L48 .5q4-.5 4.500 3.500l7.500 47q.5 4-3.500 4.500l-37 5.500q-4 .5-4.500-3.500L7 10q-.5-4 3-4.500z" fill="#f7f7f7"/><circle cx="15.500" cy="16.700" r="4.200" fill="#3f82f0"/><circle cx="17.300" cy="27.700" r="4.200" fill="#e05245"/><circle cx="19.500" cy="38.300" r="4.200" fill="#eb9a42"/><circle cx="21" cy="49.300" r="4.200" fill="#5b5f66"/><path d="M22 15.500l23-3M24 26.500l26-3.500M26 37l26-3.500M28 48l25-4" stroke="#bbb"/>${badge("2")}` },
  { dot: true, art: svg`<path d="M6 6.500L52-.5l9 55.500-46.500 7.500z" fill="#fbfaf5" stroke="#e0b83a" stroke-width=".6"/><path d="M6 6.500L52-.5l1.300 9L7.500 15.500z" fill="#fdd03a"/>${NOTE_LINES}` },
  { dot: true, art: svg`<defs><linearGradient id="ms" x1="0" y1="0" x2="0" y2="1"><stop offset="0" stop-color="#5cc4fa"/><stop offset="1" stop-color="#1a85f5"/></linearGradient></defs><path d="M32 4c17 0 30 11 30 26S49 55 32 55c-2 0-4 0-6-.5-3 3-8 4.500-13 4 3-2 4-5 3.500-8C8 46 2 39 2 30 2 15 15 4 32 4z" fill="url(#ms)"/><path d="M43 29c10 0 18 6 18 15 0 5-2 8-6 11 0 2 1 4 2 5-4 0-6-1-9-3-12 2-23-3-23-13 0-9 8-15 18-15z" fill="#f2f8fd"/><circle cx="34" cy="44" r="3" fill="#2463b0"/><circle cx="43" cy="44" r="3" fill="#2463b0"/><circle cx="52" cy="44" r="3" fill="#2463b0"/>` },
  { art: svg`<path d="M2.500 12L52 4.500l8 47L10 59.500z" fill="#f3efe3" stroke="#fff" stroke-width="2"/><path d="M23 9l28-4 4 27c-14 2-24-9-32-23z" fill="#9ad878"/><path d="M33 8c2 9 9 15 20 16" fill="none" stroke="#e8e3d6" stroke-width="6"/><path d="M4 20l50 24-1 6L6 30z" fill="#f8c040"/><path d="M15 11l5 28" stroke="#3a86c8" stroke-width="7"/><path d="M8 40l9-1 3 18-9 1.500z" fill="#f3b3c4"/><circle cx="19.500" cy="37.500" r="8" fill="#1a74d2"/><path d="M19.500 31l4.500 10.500-4.500-3-4.500 3z" fill="#fff"/><circle cx="50.500" cy="44.500" r="15" fill="#e6e8e9"/><circle cx="50.500" cy="44.500" r="9.500" fill="#f6f6f6" stroke="#4d84a4" stroke-width="1.200"/><text x="50.500" y="48.300" text-anchor="middle" font-family="Inter, sans-serif" font-size="10" fill="#444">3D</text><path d="M50.500 30.500l2 4h-4z" fill="#e33"/>` },
  { dot: true, art: svg`<circle cx="32" cy="32" r="30" fill="#f3f3f3"/><g opacity=".88">${["#f79a2a", "#f2dc3a", "#a5cf4c", "#52b995", "#5eaee0", "#7b79c4", "#c86db0", "#ee5245"].map((c, i) => svg`<rect x="24.500" y="6" width="15" height="24.500" rx="7.500" fill=${c} transform="rotate(${i * 45} 32 32)"/>`)}</g>` },
  { art: svg`<defs><linearGradient id="ft" x1="0" y1="0" x2="0" y2="1"><stop offset="0" stop-color="#3fec72"/><stop offset="1" stop-color="#20c43a"/></linearGradient></defs><rect x="2" y="6" width="55" height="48" rx="9" fill="url(#ft)"/><rect x="11" y="18" width="28" height="24" rx="6" fill="#f4faf4"/><path d="M40 25l9-6v22l-9-6z" fill="#f4faf4"/><circle cx="49" cy="43.500" r="15" fill="#f0f3f0"/><path d="M41 36c1-3 4-3 5 0l1 4-2 3c1 3 3 5 5 6l3-1 3 3c2 2-1 4-3 4-7-1-13-11-12-19z" fill="#22b83e"/>` },
  { art: svg`<g transform="rotate(3 40 20)"><rect x="10" y="5" width="50" height="38" fill="#f3efee"/><path d="M12 7h22v16H12zM36 7h22v30H36z" fill="#8e1018"/></g><path d="M3 15L52 9l5 43-49 6z" fill="#f3efee"/><path d="M5 17l22-2 2 18-22 3zM29 15l21-2 3 17-22 3zM8 38l22-3 2 18-22 3z" fill="#9b1118"/><g fill="#2a1718"><ellipse cx="18" cy="25" rx="7" ry="8"/><ellipse cx="41" cy="22" rx="7" ry="8"/><ellipse cx="20" cy="46" rx="7" ry="8"/></g><g fill="#e3ae97"><ellipse cx="18" cy="27" rx="4" ry="5"/><ellipse cx="41" cy="24" rx="4" ry="5"/><ellipse cx="20" cy="48" rx="4" ry="5"/></g><circle cx="49" cy="44" r="14.500" fill="#3c3e40"/><circle cx="49" cy="44" r="8" fill="#1d1f21"/><circle cx="49" cy="44" r="5" fill="#43506a"/><circle cx="51" cy="41" r="2" fill="#a34f86"/>` },
  { art: svg`<defs><linearGradient id="mu" x1="0" y1="0" x2="0" y2="1"><stop offset="0" stop-color="#f9506c"/><stop offset=".6" stop-color="#9b5cf0"/><stop offset="1" stop-color="#35a8f5"/></linearGradient></defs><circle cx="32" cy="32" r="30" fill="#f1f2f4" stroke="#c9ccd0" stroke-width="1.500"/><path d="M24 16l21-4v31c0 8-12 8-12 1 0-5 5-6 8.500-6V21L28 24v22c0 7-12 8-12 1 0-5 5-6 8-6z" fill="url(#mu)"/>` },
  { dot: true, art: svg`<defs><linearGradient id="pc" x1="0" y1="0" x2="0" y2="1"><stop offset="0" stop-color="#cf70f5"/><stop offset="1" stop-color="#7c2bc0"/></linearGradient></defs><circle cx="32" cy="32" r="30" fill="url(#pc)" stroke="#7e35b6" stroke-width="1"/><g fill="none" stroke="#fff" stroke-width="2.800"><path d="M20 45a18.500 18.500 0 1 1 24 0"/><path d="M24.500 37.500a11.500 11.500 0 1 1 15 0"/></g><circle cx="32" cy="30.500" r="4.800" fill="#fff"/><path d="M27.500 39c0-3.500 9-3.500 9 0l-1.300 13c-.4 3.500-6 3.500-6.400 0z" fill="#fff"/>` },
  { dot: true, art: svg`<defs><linearGradient id="tv" x1="0" y1="0" x2="0" y2="1"><stop offset="0" stop-color="#363636"/><stop offset=".6" stop-color="#060606"/></linearGradient></defs><circle cx="32" cy="32" r="29.500" fill="url(#tv)" stroke="#2f2f31" stroke-width="1.500"/><path transform="translate(10.500 20) scale(.76)" d=${APPLE} fill="#fff"/><text x="29" y="39.500" font-family="Inter, sans-serif" font-size="24" font-weight="600" fill="#fff">tv</text>` },
  { art: svg`<defs><linearGradient id="as" x1="0" y1="0" x2="0" y2="1"><stop offset="0" stop-color="#1fc3fb"/><stop offset="1" stop-color="#1f5ff0"/></linearGradient></defs><circle cx="32" cy="32" r="30" fill="url(#as)" stroke="#1a67d4" stroke-width="1"/><g stroke="#f2f7fd" stroke-width="5" stroke-linecap="round"><path d="M34 15L18 45M30 15l17 31M15 38h20M43 38h6"/></g>${badge("2", 56)}` },
  { dot: true, art: svg`<defs><linearGradient id="sy" x1="0" y1="0" x2="0" y2="1"><stop offset="0" stop-color="#cfd9e0"/><stop offset="1" stop-color="#706f70"/></linearGradient></defs><rect x="2" y="4" width="60" height="56" rx="3" fill="url(#sy)"/><circle cx="32" cy="32" r="25" fill="#2b2c2e"/><circle cx="32" cy="32" r="19.500" fill="none" stroke="#b9bbbd" stroke-width="5" stroke-dasharray="2 1.400"/><circle cx="32" cy="32" r="17" fill="none" stroke="#b9bbbd" stroke-width="3.500"/><path d="M32 32h17M32 32L23 17M32 32l-9 15" stroke="#b9bbbd" stroke-width="4"/><circle cx="32" cy="32" r="5" fill="#8d8f91"/>` },
  { dot: true, art: VSCODE },
  { art: svg`<circle cx="32" cy="32" r="29.500" fill="#f2f2f4" stroke="#cfd0d3" stroke-width="1.500"/><path d="M16 16h11l21 32H37z" fill="#fb4562"/><path d="M16 24v21q0 3 3 3h10zM48 40V19q0-3-3-3H35z" fill="#fb4562"/>` },
];

const RECENT: DockItem[] = [
  { dot: true, art: svg`<rect x="10" y="5" width="52" height="46" fill="#b08c55" stroke="#f5f3ee" stroke-width="2"/><path d="M3 15L52 6l6 43-48 8z" fill="#fff"/><path d="M5 17l45-9 2 13-45 8z" fill="#a9cdf0"/><path d="M7 29l45-8 1 9-45 8z" fill="#3d7cbf"/><path d="M8 37l45-8 3 18-45 8z" fill="#5e7180"/><path d="M10 45l16-9 6 12-20 6z" fill="#dfe8ec"/><path d="M41 42h24l-3 19H45z" fill="#6a5844"/><circle cx="53" cy="40" r="13" fill="#53575c"/><circle cx="53" cy="40" r="9.500" fill="#bfc6c8"/><path d="M46 41q7-7 14 1-5 8-14-1z" fill="#6d5940"/>` },
  { dot: true, art: svg`<rect x="2" y="5" width="60" height="53" rx="3" fill="#0f0f10" stroke="#6f7a80" stroke-width="1.500"/><rect x="6" y="9" width="52" height="44" fill="#212121"/><text x="9" y="24" font-family="Liberation Mono, monospace" font-size="16" font-weight="700" fill="#fff">&gt;_</text>` },
  { dot: true, art: svg`${tile("#fff")}<path d="M19 13h30a2 2 0 0 1 2 2v8H17v-8a2 2 0 0 1 2-2z" fill="#4a9fe8"/><path d="M17 22.500h34V32H17z" fill="#2f7bd6"/><path d="M17 32h34v9.500H17z" fill="#2361bd"/><path d="M17 41.500h34V49a2 2 0 0 1-2 2H19a2 2 0 0 1-2-2z" fill="#17449a"/><rect x="9" y="21" width="22" height="21" rx="2" fill="#1c56b6"/><text x="20" y="37.500" text-anchor="middle" font-family="Inter, sans-serif" font-size="16" font-weight="700" fill="#fff">W</text>` },
  { dot: true, art: svg`${MESSENGER}${badge("1", 56)}` },
  { dot: true, art: VSCODE },
  { dot: true, art: svg`<defs><linearGradient id="ghd" x1="0" y1="0" x2="0" y2="1"><stop offset="0" stop-color="#8f35ac"/><stop offset="1" stop-color="#5c2f8e"/></linearGradient></defs>${tile("url(#ghd)")}<path transform="translate(8.500 8.300) scale(1.960)" d=${GITHUB} fill="#eef0f8"/>` },
];

const FILES: DockItem[] = [
  { art: svg`<path d="M12 2h17v16H12zM31 2h13l8 8v10H31z" fill="#f4f4f4"/><path d="M30 1v18M44 2v8h8" stroke="#888" stroke-width="2" fill="none"/><path d="M3 14q0-2 2-2h13l4 4h38q2 0 2 2v6H3z" fill="#3f87a8"/><path d="M3 19q0-2 2-2h55q2 0 2 2v38q0 2-2 2H5q-2 0-2-2z" fill="#58a9cd"/><path d="M3 52h59v5q0 2-2 2H5q-2 0-2-2z" fill="#4c9abd"/>` },
  { art: svg`<rect x="-1" y="7" width="66" height="50" fill="#17181a"/><path d="M-1 7H6v50h-7z" fill="#222427"/><path d="M2 11h6M28 11h20M7 19h3M14 19h3M20 19h3M7 25h10M7 31h10M7 38h12M7 44h9M7 50h10M32 17h6M30 33h16M30 36h16M30 44h7M30 50h7" stroke="#5b5d60" stroke-width="1.500"/><path d="M26 8v48" stroke="#333" stroke-width="1"/><path d="M50 27h6v-5h7v8H50z" fill="#8be02a"/><rect x="44" y="42" width="20" height="21" rx="5" fill="#fff"/><circle cx="54" cy="52" r="8" fill="#a03cf0"/><path d="M48 55l5-6 3 3 5-3-5 6-3-3z" fill="#fff"/>` },
  { art: svg`<defs><linearGradient id="tr" x1="0" y1="0" x2="1" y2="0"><stop offset="0" stop-color="#6c6e70"/><stop offset=".4" stop-color="#a3a5a7"/><stop offset="1" stop-color="#5c5d5f"/></linearGradient></defs><path d="M9 7l7-6 6 4 6-7 8 5 7-5 5 6 7 2-2 8H12z" fill="#e4e4e2"/><path d="M18 5l5 6 4-4M34 3l3 8M45 4l-3 7" stroke="#4c5b66" stroke-width="2" fill="none"/><path d="M8 7q24 9 49 0l-7 51q-1 4-18 4t-17-4z" fill="url(#tr)"/><path d="M18 16l2 42M27 17l1 42M36 17v42M46 16l-3 42" stroke="#8f9193" stroke-width="1.200" opacity=".6"/>` },
];

@customElement("dock-bar")
class DockBar extends LitElement {
  static styles = css`
    :host { display: flex; width: 2447px; height: 92px; box-sizing: border-box; border: 2px solid #424347; border-bottom: 0; border-radius: 10px 10px 0 0;
      padding: 9px 0 0 2.700px; background: linear-gradient(90deg, #11131c 0%, #111720 45%, #1a171d 68%, #261e21 80%, #2b1d22 100%); }
    .cell { width: 74px; flex: none; display: flex; flex-direction: column; align-items: center; }
    svg { display: block; overflow: visible; }
    .dot { width: 8px; height: 8px; border-radius: 50%; background: #98989e; margin-top: 5px; }
    .sep { width: 2px; height: 68px; background: #515055; flex: none; margin: 1px 12px 0 18.800px; }
    .sep.second { margin: 1px 15px 0 18px; }
  `;
  cell(i: DockItem) {
    return html`<div class="cell"><svg width="64" height="64" viewBox="0 0 64 64">${i.art}</svg>${i.dot ? html`<div class="dot"></div>` : nothing}</div>`;
  }
  render() {
    return html`${MAIN.map((i) => this.cell(i))}<div class="sep"></div>${RECENT.map((i) => this.cell(i))}<div class="sep second"></div>${FILES.map((i) => this.cell(i))}`;
  }
}

@customElement("app-root")
class AppRoot extends LitElement {
  static styles = css`
    :host { display: flex; flex-direction: column; width: 2560px; height: 1600px; overflow: hidden;
      background: linear-gradient(90deg, #060a18 0%, #04070f 30%, #0d0a10 80%, #33272b 97%, #3a2d31 100%); }
    .window { height: 1459px; flex: none; display: flex; flex-direction: column; box-sizing: border-box; overflow: hidden;
      border-radius: 10px 10px 20px 20px; border-top: 1px solid #08080c; background: #6c6b70; padding-top: 2px; box-shadow: 0 0 10px #000; }
    .dock { display: flex; flex: none; padding-left: 56px; margin-top: 4px; }
  `;
  render() {
    return html`
      <menu-bar></menu-bar>
      <div class="window"><browser-chrome></browser-chrome><register-page></register-page></div>
      <div class="dock"><dock-bar></dock-bar></div>`;
  }
}
